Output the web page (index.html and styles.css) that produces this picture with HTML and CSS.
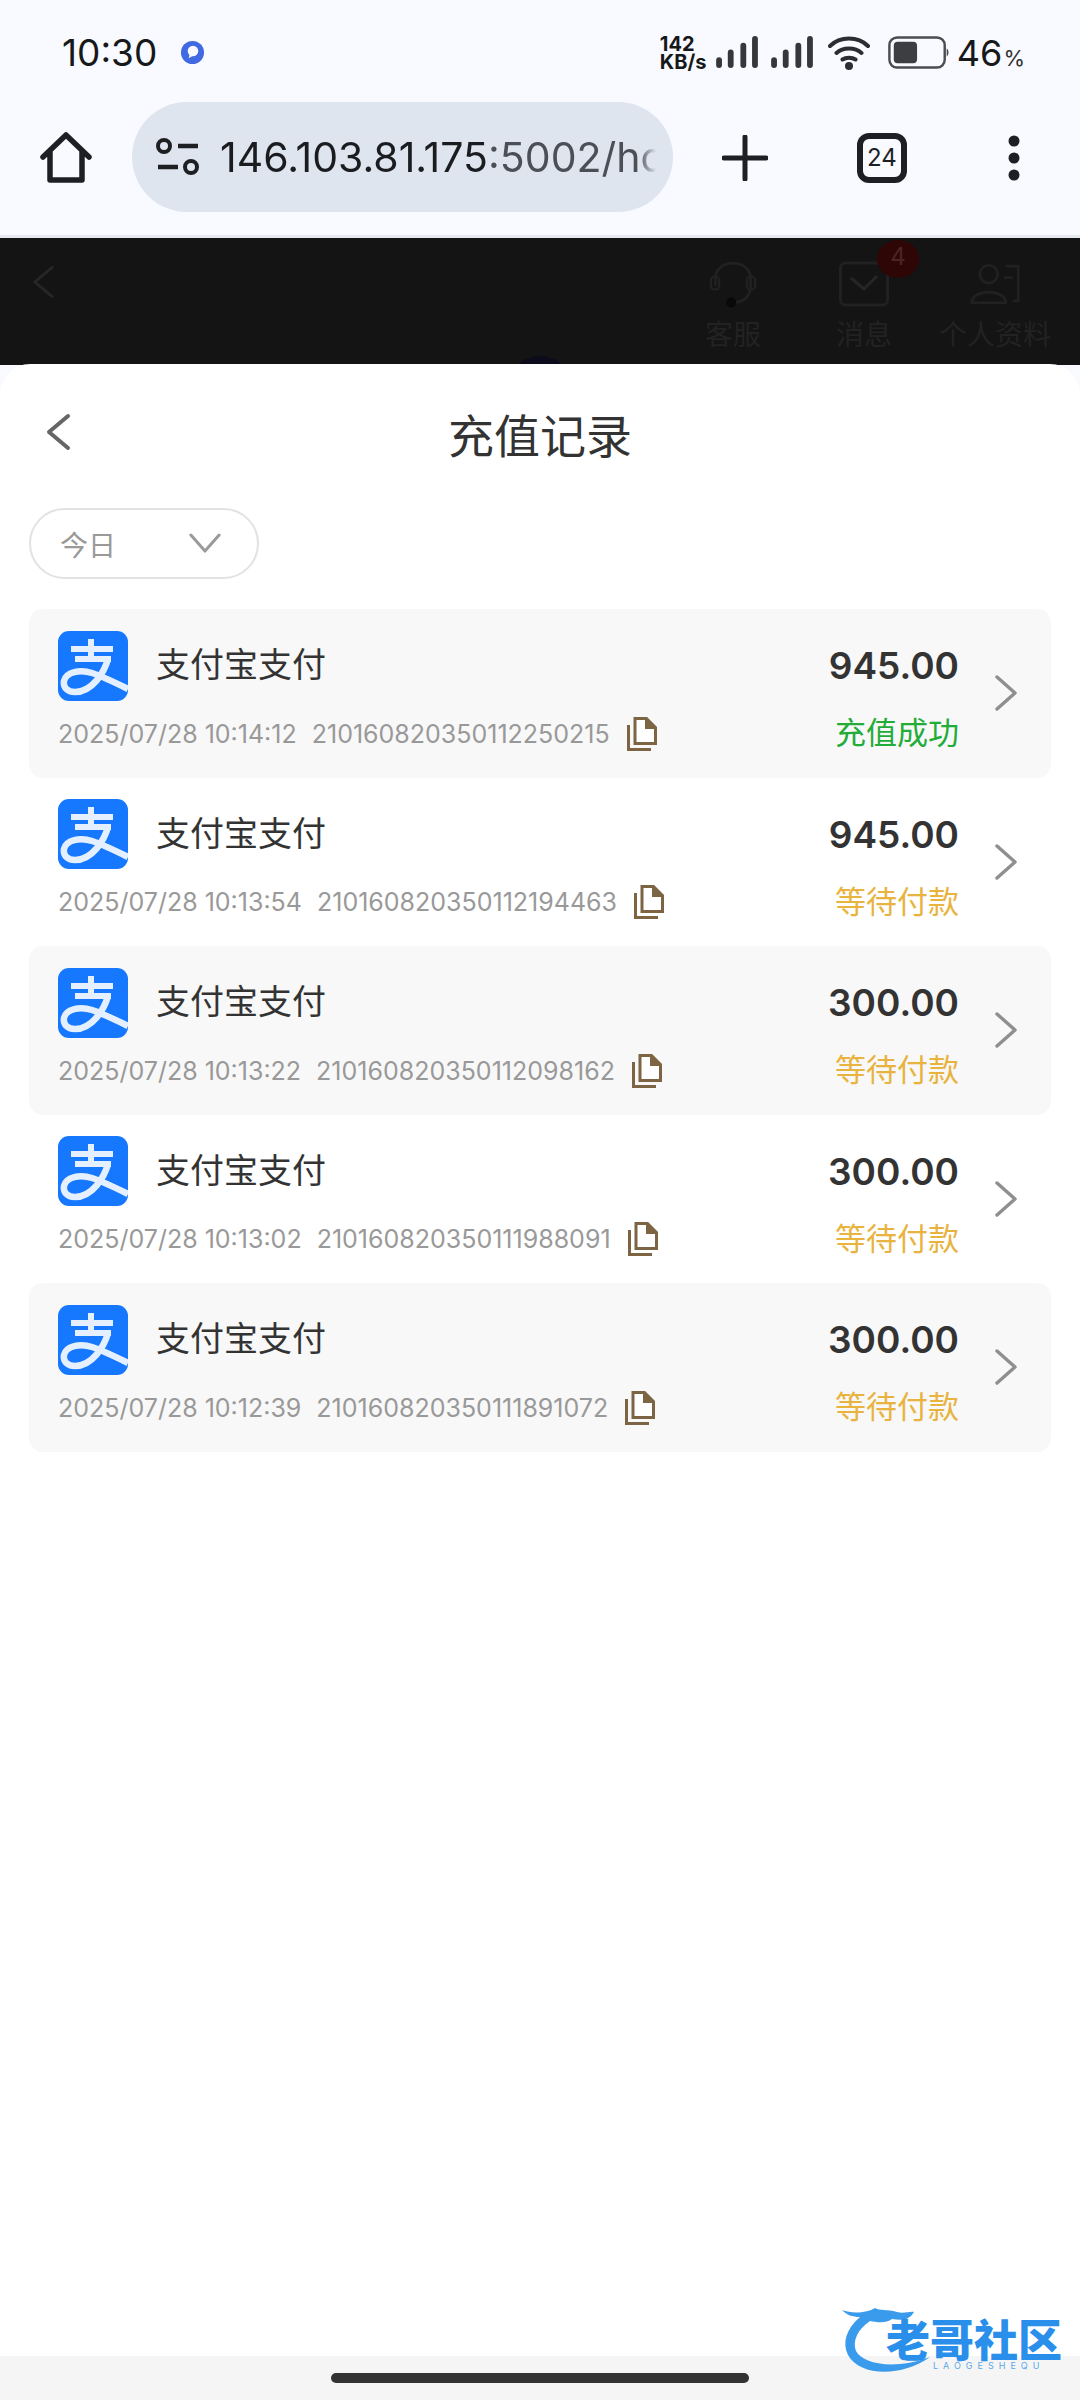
FILE: index.html
```html
<!DOCTYPE html>
<html>
<head>
	<meta charset="utf-8">
	<link rel="stylesheet" href="styles.css">
	<title>充值记录</title>
</head>
<body>
	<svg class="defs" width="0" height="0">
		<symbol id="alipay" viewBox="0 0 70 70">
			<rect width="70" height="70" rx="11" fill="#1677ff"/>
			<path d="M33 8V28M13 18H55M17 28H53" stroke="#e4f0ff" stroke-width="6" fill="none"/>
			<path d="M50 28C46 42 34 61 17 61C9 61 5 56 6 50C8 41 22 38 34 42C46 46 58 52 70 58" stroke="#e4f0ff" stroke-width="6.500" fill="none"/>
		</symbol>
		<symbol id="copy" viewBox="0 0 30 34">
			<path d="M1.5 8V32.5H24" stroke="#7d6544" stroke-width="3" fill="none"/>
			<path d="M8 1.5H19L28.5 11V26.5H8Z" stroke="#7d6544" stroke-width="3" fill="#fff"/>
			<path d="M18 0H20L30 10V12H18Z" fill="#7d6544"/>
		</symbol>
		<symbol id="next" viewBox="0 0 24 36">
			<path d="M3 2L21 18L3 34" stroke="#8f8f8f" stroke-width="3.400" fill="none" stroke-linecap="round" stroke-linejoin="round"/>
		</symbol>
	</svg>

	<div class="status">
		<span class="clock">10:30</span>
		<svg class="notify" viewBox="0 0 26 26">
			<circle cx="13" cy="13" r="12" fill="#4169e1"/>
			<circle cx="13.5" cy="11.5" r="5.5" fill="#f8faff"/>
			<path d="M10 15L9 19L14 16Z" fill="#f8faff"/>
		</svg>
		<div class="status-right">
			<div class="speed"><b>142</b><b>KB/s</b></div>
			<svg class="signal" viewBox="0 0 44 34">
				<rect x="0" y="22" width="6" height="11" rx="3"/>
				<rect x="12" y="14" width="6" height="19" rx="3"/>
				<rect x="25" y="7" width="6" height="26" rx="3"/>
				<rect x="37" y="0" width="6" height="33" rx="3"/>
			</svg>
			<svg class="signal" viewBox="0 0 44 34">
				<rect x="0" y="22" width="6" height="11" rx="3"/>
				<rect x="12" y="14" width="6" height="19" rx="3"/>
				<rect x="25" y="7" width="6" height="26" rx="3"/>
				<rect x="37" y="0" width="6" height="33" rx="3"/>
			</svg>
			<svg class="wifi" viewBox="0 0 42 34">
				<path d="M2 10C12 0 30 0 40 10M8.5 17C15 11 27 11 33.5 17M14.500 23.500C18 21 24 21 27.500 23.500" stroke="#2b2d30" stroke-width="4" fill="none" stroke-linecap="round"/>
				<circle cx="21" cy="30" r="4" fill="#2b2d30"/>
			</svg>
			<svg class="battery" viewBox="0 0 64 34">
				<rect x="1.500" y="1.500" width="57" height="31" rx="8" fill="none" stroke="#4a4c50" stroke-width="2.500"/>
				<rect x="6" y="6" width="24" height="22" rx="4" fill="#3c3e42"/>
				<path d="M60.500 13C63 14 63 20 60.500 21Z" fill="#4a4c50"/>
			</svg>
			<span class="level">46<small>%</small></span>
		</div>
	</div>

	<div class="toolbar">
		<svg class="home" viewBox="0 0 52 52">
			<path d="M3 25L26 3L49 25M10 19V48H42V19" stroke="#1d1f22" stroke-width="5.500" fill="none" stroke-linecap="round" stroke-linejoin="round"/>
		</svg>
		<div class="address">
			<svg class="site" viewBox="0 0 44 38">
				<circle cx="8" cy="8" r="6" fill="none" stroke="#1d1f22" stroke-width="4"/>
				<path d="M22 8H42M2 29H22" stroke="#1d1f22" stroke-width="4.500"/>
				<circle cx="35" cy="29" r="6" fill="none" stroke="#1d1f22" stroke-width="4"/>
			</svg>
			<div class="url"><span>146.103.81.175</span>:5002/home</div>
		</div>
		<svg class="plus" viewBox="0 0 46 46">
			<path d="M23 2V44M2 23H44" stroke="#1d1f22" stroke-width="5" stroke-linecap="round"/>
		</svg>
		<div class="tabs">24</div>
		<svg class="more" viewBox="0 0 12 46">
			<circle cx="6" cy="6" r="5.500"/>
			<circle cx="6" cy="23" r="5.500"/>
			<circle cx="6" cy="40" r="5.500"/>
		</svg>
	</div>

	<div class="behind">
		<svg class="behind-back" viewBox="0 0 24 36">
			<path d="M22 2L3 18L22 34" stroke="#262626" stroke-width="3" fill="none"/>
		</svg>
		<div class="behind-nav">
			<div class="behind-item">
				<svg viewBox="0 0 50 52">
					<path d="M6 28V20C6 -2 44 -2 44 20V28C44 40 38 45 27 46" stroke="#212121" stroke-width="3" fill="none"/>
					<rect x="1" y="18" width="9" height="14" rx="4" fill="none" stroke="#212121" stroke-width="2.500"/>
					<rect x="40" y="18" width="9" height="14" rx="4" fill="none" stroke="#212121" stroke-width="2.500"/>
					<circle cx="23" cy="46" r="5" fill="#090909" stroke="#090909"/>
				</svg>
				客服
			</div>
			<div class="behind-item">
				<svg viewBox="0 0 50 46">
					<rect x="1.500" y="2" width="47" height="42" rx="5" fill="none" stroke="#212121" stroke-width="3"/>
					<path d="M12 17L25 28L38 15" stroke="#262626" stroke-width="3" fill="none"/>
				</svg>
				消息
				<span class="badge">4</span>
			</div>
			<div class="behind-item">
				<svg viewBox="0 0 56 46">
					<circle cx="21" cy="12" r="10" fill="none" stroke="#212121" stroke-width="3"/>
					<path d="M2 44C2 28 40 28 40 44Z" fill="none" stroke="#212121" stroke-width="3"/>
					<path d="M40 3H54V42H48M38 16H48" stroke="#212121" stroke-width="3" fill="none"/>
				</svg>
				个人资料
			</div>
		</div>
		<div class="behind-avatar"></div>
	</div>

	<div class="sheet">
		<div class="sheet-head">
			<svg class="back" viewBox="0 0 26 38">
				<path d="M23 3L4 19L23 35" stroke="#666" stroke-width="4" fill="none" stroke-linecap="round" stroke-linejoin="round"/>
			</svg>
			<h1>充值记录</h1>
		</div>
		<div class="filter">
			今日
			<svg viewBox="0 0 34 24">
				<path d="M2 3L17 20L32 3" stroke="#9a9a9a" stroke-width="3.200" fill="none" stroke-linecap="round" stroke-linejoin="round"/>
			</svg>
		</div>
		<div class="list">
			<div class="row">
				<div class="row-main">
					<div class="pay"><svg class="pay-logo"><use href="#alipay"/></svg><span>支付宝支付</span></div>
					<div class="meta"><span>2025/07/28 10:14:12</span><span>210160820350112250215</span><svg class="copy"><use href="#copy"/></svg></div>
				</div>
				<div class="row-side"><b>945.00</b><span class="ok">充值成功</span></div>
				<svg class="next"><use href="#next"/></svg>
			</div>
			<div class="row">
				<div class="row-main">
					<div class="pay"><svg class="pay-logo"><use href="#alipay"/></svg><span>支付宝支付</span></div>
					<div class="meta"><span>2025/07/28 10:13:54</span><span>210160820350112194463</span><svg class="copy"><use href="#copy"/></svg></div>
				</div>
				<div class="row-side"><b>945.00</b><span class="wait">等待付款</span></div>
				<svg class="next"><use href="#next"/></svg>
			</div>
			<div class="row">
				<div class="row-main">
					<div class="pay"><svg class="pay-logo"><use href="#alipay"/></svg><span>支付宝支付</span></div>
					<div class="meta"><span>2025/07/28 10:13:22</span><span>210160820350112098162</span><svg class="copy"><use href="#copy"/></svg></div>
				</div>
				<div class="row-side"><b>300.00</b><span class="wait">等待付款</span></div>
				<svg class="next"><use href="#next"/></svg>
			</div>
			<div class="row">
				<div class="row-main">
					<div class="pay"><svg class="pay-logo"><use href="#alipay"/></svg><span>支付宝支付</span></div>
					<div class="meta"><span>2025/07/28 10:13:02</span><span>210160820350111988091</span><svg class="copy"><use href="#copy"/></svg></div>
				</div>
				<div class="row-side"><b>300.00</b><span class="wait">等待付款</span></div>
				<svg class="next"><use href="#next"/></svg>
			</div>
			<div class="row">
				<div class="row-main">
					<div class="pay"><svg class="pay-logo"><use href="#alipay"/></svg><span>支付宝支付</span></div>
					<div class="meta"><span>2025/07/28 10:12:39</span><span>210160820350111891072</span><svg class="copy"><use href="#copy"/></svg></div>
				</div>
				<div class="row-side"><b>300.00</b><span class="wait">等待付款</span></div>
				<svg class="next"><use href="#next"/></svg>
			</div>
		</div>
		<div class="gesture"><div class="handle"></div></div>
	</div>

	<div class="mark">
		<svg viewBox="0 0 148 72">
			<path d="M0 5C10 9 25 8 33 3C38 6 45 4 55 7C62 9 68 6 72 7C68 14 62 16 50 14C44 19 34 17 28 16C16 24 10 36 14 46C20 58 50 66 88 52C60 72 18 72 6 50C0 38 4 24 18 12C10 12 5 10 0 5Z" fill="#3a9bec"/>
		</svg>
		<div class="mark-text"><b>老哥社区</b><span>LAOGESHEQU</span></div>
	</div>
</body>
</html>
```

FILE: styles.css
```css
* {
	box-sizing: border-box;
}

html, body {
	height: 100%;
}

body {
	margin: 0;
	width: 1080px;
	height: 2400px;
	display: flex;
	flex-direction: column;
	position: relative;
	overflow: hidden;
	background-color: #f8faff;
	color: #333;
	font-family: Inter, "Noto Sans CJK SC", sans-serif;
}

.defs {
	position: absolute;
}

/* status bar */
.status {
	height: 102px;
	flex: none;
	display: flex;
	align-items: center;
	padding: 3px 55px 0 62px;
}

.clock {
	font-size: 37px;
	color: #17181a;
}

.notify {
	width: 25px;
	height: 25px;
	margin-left: 23px;
}

.status-right {
	margin-left: auto;
	display: flex;
	align-items: center;
}

.speed {
	display: flex;
	flex-direction: column;
	font-size: 20px;
	line-height: 18px;
	color: #17181a;
	width: 56px;
}

.signal {
	width: 43px;
	height: 33px;
	margin-right: 12px;
	fill: #35373a;
}

.wifi {
	width: 42px;
	height: 34px;
	margin-left: 2px;
}

.battery {
	width: 64px;
	height: 33px;
	margin-left: 17px;
}

.level {
	margin-left: 6px;
	font-size: 36px;
	color: #17181a;
}

.level small {
	font-size: 22px;
	margin-left: 1px;
	color: #333;
}

/* browser toolbar */
.toolbar {
	height: 136px;
	flex: none;
	display: flex;
	align-items: flex-start;
	border-bottom: 3px solid #e6e9ee;
}

.home {
	width: 52px;
	height: 52px;
	margin: 30px 0 0 40px;
}

.address {
	width: 541px;
	height: 110px;
	margin-left: 40px;
	border-radius: 55px;
	background-color: #dfe5ee;
	display: flex;
	align-items: center;
	padding-left: 24px;
}

.site {
	width: 44px;
	height: 38px;
	flex: none;
}

.url {
	width: 436px;
	margin-left: 20px;
	font-size: 41px;
	color: #4b5057;
	white-space: nowrap;
	overflow: hidden;
	-webkit-mask-image: linear-gradient(to right, #000 96%, transparent);
	mask-image: linear-gradient(to right, #000 96%, transparent);
}

.url span {
	color: #1a1c20;
}

.plus {
	width: 46px;
	height: 46px;
	margin: 33px 0 0 49px;
}

.tabs {
	width: 50px;
	height: 50px;
	margin: 31px 0 0 89px;
	border: 6px solid #1d1f22;
	border-radius: 12px;
	font-size: 24px;
	line-height: 38px;
	text-align: center;
	color: #1d1f22;
}

.more {
	width: 12px;
	height: 46px;
	margin: 33px 0 0 101px;
	fill: #1d1f22;
}

/* dimmed page under the sheet */
.behind {
	height: 127px;
	flex: none;
	display: flex;
	position: relative;
	overflow: hidden;
	background-color: #141414;
	padding-right: 30px;
}

.behind-back {
	width: 23px;
	height: 36px;
	margin: 26px 0 0 32px;
}

.behind-nav {
	margin-left: auto;
	display: flex;
	gap: 21px;
	padding-top: 22px;
}

.behind-item {
	width: 110px;
	position: relative;
	display: flex;
	flex-direction: column;
	align-items: center;
	gap: 10px;
	font-size: 28px;
	line-height: 34px;
	color: #222;
	white-space: nowrap;
}

.behind-item svg {
	width: 50px;
	height: 48px;
}

.badge {
	position: absolute;
	left: 68px;
	top: -20px;
	width: 42px;
	height: 38px;
	border-radius: 50%;
	background-color: #2e0606;
	color: #4c2424;
	font-size: 24px;
	text-align: center;
}

.behind-avatar {
	position: absolute;
	left: 505px;
	top: 118px;
	width: 70px;
	height: 70px;
	border-radius: 50%;
	background-color: #0b0b1c;
}

/* bottom sheet */
.sheet {
	flex: 1;
	margin-top: -1px;
	position: relative;
	display: flex;
	flex-direction: column;
	background-color: #fff;
	border-radius: 30px 30px 0 0;
	overflow: hidden;
}

.sheet-head {
	height: 144px;
	flex: none;
	position: relative;
	display: flex;
	align-items: center;
	justify-content: center;
	padding-bottom: 6px;
}

.sheet-head h1 {
	margin: 0;
	font-size: 46px;
	font-weight: 400;
	color: #333;
}

.back {
	position: absolute;
	left: 45px;
	top: 49px;
	width: 26px;
	height: 38px;
}

.filter {
	width: 230px;
	height: 71px;
	flex: none;
	margin-left: 29px;
	padding: 0 36px 0 29px;
	border: 2px solid #e2e2e2;
	border-radius: 36px;
	display: flex;
	align-items: center;
	justify-content: space-between;
	font-size: 28px;
	color: #999;
}

.filter svg {
	width: 32px;
	height: 23px;
}

.list {
	margin: 30px 29px 0;
	display: flex;
	flex-direction: column;
}

.row {
	height: 168.500px;
	flex: none;
	display: flex;
	align-items: center;
	padding: 0 33px 0 29px;
	border-radius: 14px;
}

.row:nth-child(odd) {
	background-color: #f8f8f8;
}

.row-main {
	flex: 1;
	min-width: 0;
	padding-bottom: 4px;
}

.pay {
	display: flex;
	align-items: center;
	font-size: 34px;
	color: #333;
}

.pay span {
	margin-bottom: 6px;
}

.pay-logo {
	width: 70px;
	height: 70px;
	margin-right: 28px;
}

.meta {
	display: flex;
	align-items: center;
	margin-top: 15px;
	font-size: 25px;
	line-height: 36px;
	color: #999;
	gap: 15px;
	white-space: nowrap;
}

.copy {
	width: 30px;
	height: 34px;
	margin-left: 2px;
}

.row-side {
	display: flex;
	flex-direction: column;
	align-items: flex-end;
	gap: 24px;
	padding-top: 10px;
}

.row-side b {
	font-size: 37px;
	line-height: 46px;
	font-weight: 600;
	color: #333;
}

.row-side span {
	font-size: 31px;
	line-height: 40px;
}

.ok {
	color: #22ac38;
}

.wait {
	color: #e8b33f;
}

.next {
	width: 24px;
	height: 36px;
	margin-left: 35px;
}

.gesture {
	margin-top: auto;
	height: 44px;
	flex: none;
	background-color: #f5f5f5;
	display: flex;
	justify-content: center;
	padding-top: 17px;
}

.handle {
	width: 418px;
	height: 10px;
	border-radius: 5px;
	background-color: #333;
}

/* watermark in the corner */
.mark {
	position: absolute;
	left: 842px;
	top: 2305px;
	width: 225px;
	height: 72px;
}

.mark svg {
	position: absolute;
	left: 0;
	top: 0;
	width: 148px;
	height: 72px;
}

.mark-text {
	position: absolute;
	left: 44px;
	top: 18px;
	display: flex;
	flex-direction: column;
	color: #2a8fea;
}

.mark-text b {
	font-size: 44px;
	line-height: 36px;
	font-weight: 900;
}

.mark-text span {
	margin: 1px 0 0 47px;
	font-size: 9px;
	line-height: 11px;
	letter-spacing: 5px;
	color: #5aa9ea;
}
```
